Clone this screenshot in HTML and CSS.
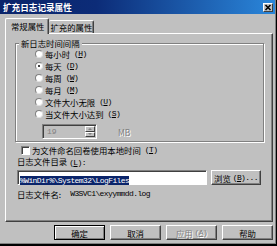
FILE: index.html
```html
<!DOCTYPE html>
<html lang="zh-CN">
<head>
  <meta charset="UTF-8">
  <title>扩充日志记录属性</title>
  <link rel="stylesheet" href="styles.css">
</head>
<body>
  <div class="window">
    <!-- 标题栏 -->
    <div class="titlebar">
      <span class="title">扩充日志记录属性</span>
      <span class="close">
        <svg width="8" height="7" viewBox="0 0 8 7"><path d="M1.5 1 L6.5 6 M6.5 1 L1.5 6" stroke="#000" stroke-width="1.6" fill="none"/></svg>
      </span>
    </div>

    <!-- 选项卡 -->
    <div class="tabs">
      <div class="tab active">常规属性</div>
      <div class="tab">扩充的属性</div>
    </div>

    <div class="panel">
      <fieldset class="group">
        <legend>新日志时间间隔</legend>
        <div class="radio-row"><span class="radio"></span>每小时 <span class="key">(<u>H</u>)</span></div>
        <div class="radio-row"><span class="radio checked"></span>每天 <span class="key">(<u>D</u>)</span></div>
        <div class="radio-row"><span class="radio"></span>每周 <span class="key">(<u>W</u>)</span></div>
        <div class="radio-row"><span class="radio"></span>每月 <span class="key">(<u>M</u>)</span></div>
        <div class="radio-row"><span class="radio"></span>文件大小无限 <span class="key">(<u>U</u>)</span></div>
        <div class="radio-row"><span class="radio"></span>当文件大小达到 <span class="key">(<u>S</u>)</span></div>
        <div class="spin-row">
          <div class="spin">
            <span class="spin-value">19</span>
            <span class="spin-btns">
              <span class="spin-btn"><i class="up"></i></span>
              <span class="spin-btn"><i class="down"></i></span>
            </span>
          </div>
          <span class="unit">MB</span>
        </div>
      </fieldset>

      <div class="check-row"><span class="checkbox"></span>为文件命名回卷使用本地时间 <span class="key">(<u>T</u>)</span></div>
      <div class="field-label">日志文件目录 <span class="key">(<u>L</u>):</span></div>
      <div class="dir-row">
        <div class="textbox"><span class="selected">%WinDir%\System32\LogFiles</span></div>
        <div class="btn browse">浏览 <span class="key">(<u>B</u>)...</span></div>
      </div>
      <div class="name-row">
        <span class="name-label">日志文件名:</span>
        <span class="mono">W3SVC1\exyymmdd.log</span>
      </div>
    </div>

    <!-- 底部按钮 -->
    <div class="buttons">
      <div class="btn default">确定</div>
      <div class="btn">取消</div>
      <div class="btn disabled">应用 <span class="key">(<u>A</u>)</span></div>
      <div class="btn">帮助</div>
    </div>
  </div>
</body>
</html>
```

FILE: styles.css
```css
body {
  margin: 0;
  font-family: "Noto Sans CJK SC", sans-serif;
  font-size: 8.4px;
  color: #000;
  background: #c0c0c0;
}
.window {
  width: 277px;
  height: 246px;
  box-sizing: border-box;
  background: #c0c0c0;
  border-right: 1px solid #000;
  border-bottom: 2px solid #000;
  box-shadow: inset -1px -1px 0 #808080;
  display: flex;
  flex-direction: column;
}
.titlebar {
  height: 14px;
  margin-right: 1px;
  padding: 0 2px 0 3px;
  display: flex;
  align-items: center;
  justify-content: space-between;
  background: linear-gradient(to right, #0a246a 0%, #0c2c78 35%, #2a86da 100%);
}
.title {
  color: #fff;
  font-weight: bold;
  font-size: 8.6px;
  line-height: 10px;
}
.close {
  width: 8px;
  height: 7px;
  background: #c0c0c0;
  border: 1px solid;
  border-color: #fff #404040 #404040 #fff;
  display: flex;
  align-items: center;
  justify-content: center;
}
.tabs {
  height: 15px;
  margin-top: 4px;
  padding-left: 5px;
  display: flex;
  align-items: flex-end;
}
.tab {
  height: 12px;
  line-height: 12px;
  padding: 0 1px 0 2px;
  border-top: 1px solid #fff;
  border-right: 1px solid #404040;
  box-shadow: inset -1px 0 0 #808080;
  border-radius: 2px 2px 0 0;
  background: #c0c0c0;
}
.tab.active {
  height: 15px;
  line-height: 14px;
  padding: 0 3px 0 5px;
  margin-bottom: -1px;
  border-left: 1px solid #fff;
  position: relative;
  z-index: 1;
}
.panel {
  height: 189px;
  box-sizing: border-box;
  margin: 0 3px 0 5px;
  border: 1px solid;
  border-color: #fff #404040 #404040 #fff;
  box-shadow: inset -1px -1px 0 #808080;
  display: flex;
  flex-direction: column;
}
.group {
  margin: 4px 8px 0 9px;
  padding: 0 0 2px 3px;
  border: 1px solid #808080;
  box-shadow: 1px 1px 0 #fff, inset 1px 1px 0 #fff;
}
.group legend {
  padding: 0 2px;
  line-height: 10px;
  background: #c0c0c0;
}
.key {
  font-family: "Liberation Mono", monospace;
  font-size: 8px;
  letter-spacing: -0.6px;
}
.radio-row {
  height: 12px;
  margin-left: 16px;
  display: flex;
  align-items: center;
  gap: 2px;
  line-height: 10px;
  white-space: pre;
}
.radio {
  width: 6px;
  height: 6px;
  border: 1px solid;
  border-color: #808080 #e0e0e0 #e0e0e0 #808080;
  border-radius: 50%;
  background: #fff;
  display: flex;
  align-items: center;
  justify-content: center;
}
.radio.checked::after {
  content: "";
  width: 2px;
  height: 2px;
  border-radius: 50%;
  background: #000;
}
.spin-row {
  margin: 4px 0 0 23px;
  display: flex;
  align-items: center;
}
.spin {
  width: 55px;
  height: 15px;
  box-sizing: border-box;
  border: 1px solid;
  border-color: #808080 #fff #fff #808080;
  box-shadow: inset 1px 1px 0 #404040;
  display: flex;
  justify-content: space-between;
  padding: 1px;
}
.spin-value {
  color: #808080;
  line-height: 11px;
  padding-left: 3px;
  font-family: "Liberation Mono", monospace;
  font-size: 8px;
}
.spin-btns {
  width: 10px;
  display: flex;
  flex-direction: column;
}
.spin-btn {
  flex: 1;
  box-sizing: border-box;
  border: 1px solid;
  border-color: #fff #404040 #404040 #fff;
  display: flex;
  align-items: center;
  justify-content: center;
}
.spin-btn i {
  width: 0;
  height: 0;
  border-left: 2px solid transparent;
  border-right: 2px solid transparent;
}
.spin-btn i.up {
  border-bottom: 2px solid #808080;
}
.spin-btn i.down {
  border-top: 2px solid #808080;
}
.unit {
  margin-left: 21px;
  color: #808080;
  text-shadow: 1px 1px 0 #fff;
  line-height: 10px;
}
.check-row {
  height: 10px;
  margin: 3px 0 0 15px;
  display: flex;
  align-items: center;
  gap: 2px;
  line-height: 10px;
  white-space: pre;
}
.checkbox {
  width: 7px;
  height: 7px;
  border: 1px solid;
  border-color: #808080 #fff #fff #808080;
  background: #fff;
  box-shadow: inset 1px 1px 0 #404040;
}
.field-label {
  height: 10px;
  line-height: 10px;
  margin: 1px 0 0 11px;
}
.dir-row {
  height: 15px;
  margin: 4px 0 0 11px;
  display: flex;
  gap: 4px;
}
.textbox {
  width: 190px;
  box-sizing: border-box;
  border: 1px solid;
  border-color: #808080 #fff #fff #808080;
  box-shadow: inset 1px 1px 0 #404040;
  background: #fff;
  padding: 2px 0 0 2px;
}
.selected,
.mono {
  font-family: "Liberation Mono", monospace;
  font-size: 8px;
  letter-spacing: -0.6px;
  line-height: 9px;
}
.selected {
  display: inline-block;
  background: #0a246a;
  color: #fff;
}
.name-row {
  height: 10px;
  line-height: 10px;
  margin: 4px 0 0 11px;
  display: flex;
  gap: 9px;
}
.btn {
  width: 51px;
  height: 15px;
  box-sizing: border-box;
  border: 1px solid;
  border-color: #fff #404040 #404040 #fff;
  box-shadow: inset -1px -1px 0 #808080;
  display: flex;
  align-items: center;
  justify-content: center;
  line-height: 10px;
  white-space: pre;
}
.browse {
  width: 50px;
}
.btn.default {
  border-color: #000;
  box-shadow: inset 1px 1px 0 #fff, inset -1px -1px 0 #808080;
}
.btn.disabled {
  color: #808080;
  text-shadow: 1px 1px 0 #fff;
}
.buttons {
  margin: 3px 3px 0 0;
  display: flex;
  justify-content: flex-end;
  gap: 5px;
}
```
